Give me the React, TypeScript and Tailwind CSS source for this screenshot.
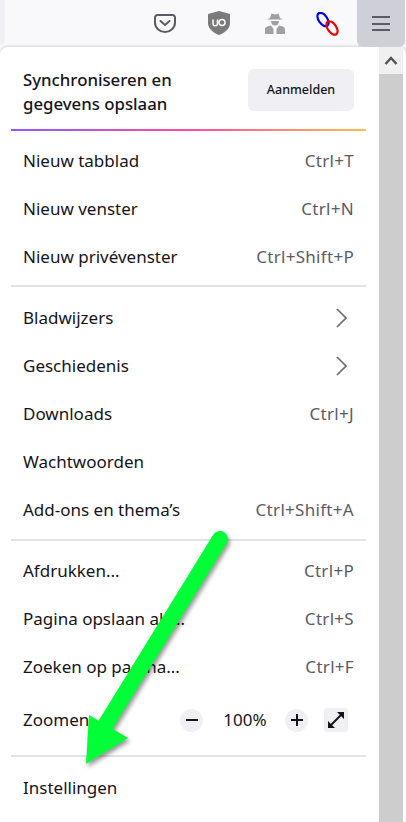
import React from "react";

const font = "font-['Noto_Sans',sans-serif]";

interface RowProps {
    label: string;
    shortcut?: string;
    arrow?: boolean;
}
function Row(props: RowProps) {
    return (
        <div className="flex h-12 items-center justify-between px-[12px] text-[17px] text-[#15141a]">
            <span>{props.label}</span>
            {props.shortcut && <span className="text-[17px] tracking-[0.3px] text-[#5b5b66]">{props.shortcut}</span>}
            {props.arrow && (
                <svg className="mr-[7px]" width="11" height="20" viewBox="0 0 11 20" fill="none" stroke="#6b6b73" strokeWidth="1.6">
                    <path d="M1 1 L10 10 L1 19" />
                </svg>
            )}
        </div>
    );
}

function Separator() {
    return <div className="h-[2px] bg-[#e3e3e5]" />;
}

function App() {
    return (
        <div className={`relative h-[822px] w-[406px] overflow-hidden bg-[#f9f9fb] ${font}`}>
            <div className="flex h-[47px] items-start pr-[1px]">
                <div className="h-[45px] w-[5px] rounded-br-[6px] bg-[#f0f0f4]" />
                <svg className="ml-[149px] mt-[14px]" width="22" height="19" viewBox="0 0 22 19" fill="none" stroke="#5b5b66" strokeWidth="2">
                    <path d="M3.5 1 H18.5 A2.5 2.5 0 0 1 21 3.5 V8.5 A10 9.5 0 0 1 1 8.5 V3.5 A2.5 2.5 0 0 1 3.5 1 Z" />
                    <path d="M6.5 7 L11 11 L15.5 7" strokeLinecap="round" />
                </svg>
                <svg className="ml-[32px] mt-[11px]" width="22" height="24" viewBox="0 0 22 24">
                    <path d="M11 0 L22 3 V12 C22 18 16 22 11 24 C6 22 0 18 0 12 V3 Z" fill="#7a7a7a" />
                    <path d="M5 8.5 V12.5 A2 2 0 0 0 9.5 12.5 V8.5" fill="none" stroke="#fff" strokeWidth="1.5" />
                    <rect x="11" y="8.5" width="6" height="6" rx="3" fill="none" stroke="#fff" strokeWidth="1.5" />
                </svg>
                <svg className="ml-[33px] mt-[13px]" width="24" height="21" viewBox="0 0 24 21" fill="#a0a0a0">
                    <path d="M7 5 L8.5 0.5 L12 1.5 L15.5 0.5 L17 5 L20 6.5 H4 Z" />
                    <path d="M8 8 H16 A4 4.5 0 0 1 8 8 Z" />
                    <path d="M2 21 V16 C2 14 5 13 8 12.5 L10.5 16 V21 Z M22 21 V16 C22 14 19 13 16 12.5 L13.5 16 V21 Z" />
                </svg>
                <svg className="ml-[29px] mt-[12px]" width="24" height="24" viewBox="0 0 24 24" fill="none" strokeWidth="2.2">
                    <ellipse cx="7" cy="7.5" rx="4.3" ry="7.6" stroke="#0000ee" transform="rotate(-35 7 7.5)" />
                    <ellipse cx="16" cy="16" rx="4.3" ry="7.6" stroke="#ee0000" transform="rotate(-35 16 16)" />
                </svg>
                <div className="ml-[17px] flex h-[47px] w-[48px] items-center justify-center rounded-b-[6px] bg-[#cfcfd8]">
                    <div className="flex w-[18px] flex-col gap-[4.5px]">
                        <div className="h-[2px] bg-[#5b5b66]" />
                        <div className="h-[2px] bg-[#5b5b66]" />
                        <div className="h-[2px] bg-[#5b5b66]" />
                    </div>
                </div>
            </div>

            <div className="flex h-[775px] justify-between rounded-t-[8px] bg-white shadow-[0_-1px_3px_rgba(0,0,0,0.15)]">
                <div className="w-[379px] pl-[11px] pr-[13px]">
                    <div className="flex h-[82px] items-center justify-between px-[12px] pt-[4px]">
                        <div className="mt-[3px] text-[16.8px] leading-[24px] font-medium text-[#15141a]">
                            Synchroniseren en<br />gegevens opslaan
                        </div>
                        <div className="flex h-[42px] w-[106px] items-center justify-center rounded-[6px] bg-[#f0f0f4] text-[12.5px] font-medium text-[#15141a]">
                            Aanmelden
                        </div>
                    </div>
                    <div className="h-[2px] bg-[linear-gradient(90deg,#9059ff,#ff4aa2,#ffbd4f)]" />
                    <div className="pt-[6px] pb-[4px]">
                        <Row label="Nieuw tabblad" shortcut="Ctrl+T" />
                        <Row label="Nieuw venster" shortcut="Ctrl+N" />
                        <Row label="Nieuw privévenster" shortcut="Ctrl+Shift+P" />
                    </div>
                    <Separator />
                    <div className="pt-[7px] pb-[5px]">
                        <Row label="Bladwijzers" arrow />
                        <Row label="Geschiedenis" arrow />
                        <Row label="Downloads" shortcut="Ctrl+J" />
                        <Row label="Wachtwoorden" />
                        <Row label="Add-ons en thema’s" shortcut="Ctrl+Shift+A" />
                    </div>
                    <Separator />
                    <div className="pt-[6px] pb-[11px]">
                        <Row label="Afdrukken..." shortcut="Ctrl+P" />
                        <Row label="Pagina opslaan als..." shortcut="Ctrl+S" />
                        <Row label="Zoeken op pagina..." shortcut="Ctrl+F" />
                        <div className="mt-[5px] flex h-12 items-center justify-between pl-[12px] pr-[18px] text-[17px] text-[#15141a]">
                            <span>Zoomen</span>
                            <div className="flex items-center">
                                <div className="flex h-[23px] w-[23px] items-center justify-center rounded-full bg-[#f0f0f4]">
                                    <div className="h-[2px] w-[12px] bg-[#15141a]" />
                                </div>
                                <span className="w-[82px] pl-[2px] text-center">100%</span>
                                <div className="flex h-[23px] w-[23px] items-center justify-center rounded-full bg-[#f0f0f4]">
                                    <svg width="12" height="12" viewBox="0 0 12 12" stroke="#15141a" strokeWidth="2">
                                        <path d="M0 6 H12 M6 0 V12" />
                                    </svg>
                                </div>
                                <div className="ml-[16px] flex h-[24px] w-[24px] items-center justify-center rounded-[3px] bg-[#f0f0f4]">
                                    <svg width="18" height="18" viewBox="0 0 18 18" fill="#15141a" stroke="#15141a">
                                        <path d="M3 15 L15 3" strokeWidth="2" />
                                        <path d="M10 1 H17 V8 Z M1 10 V17 H8 Z" strokeWidth="0" />
                                    </svg>
                                </div>
                            </div>
                        </div>
                    </div>
                    <Separator />
                    <div className="pt-[7px]">
                        <Row label="Instellingen" />
                    </div>
                </div>
                <div className="mr-[3px] flex w-[24px] flex-col">
                    <div className="flex h-[27px] items-center justify-center bg-[#f0f0f0]">
                        <svg width="14" height="9" viewBox="0 0 14 9" fill="none" stroke="#505050" strokeWidth="2.4">
                            <path d="M1.5 8 L7 2 L12.5 8" />
                        </svg>
                    </div>
                    <div className="flex-1 bg-[#cdcdcd]" />
                </div>
            </div>

            <svg className="absolute left-0 top-0" width="406" height="822" viewBox="0 0 406 822" fill="none">
                <g className="drop-shadow-[2px_3px_2px_rgba(0,0,0,0.4)]">
                    <path d="M220 539 L106 724" stroke="#00ff37" strokeWidth="16" strokeLinecap="round" />
                    <path d="M89 715 L128 738 L86 764 Z" fill="#00ff37" />
                </g>
            </svg>
        </div>
    );
}

export default App;
